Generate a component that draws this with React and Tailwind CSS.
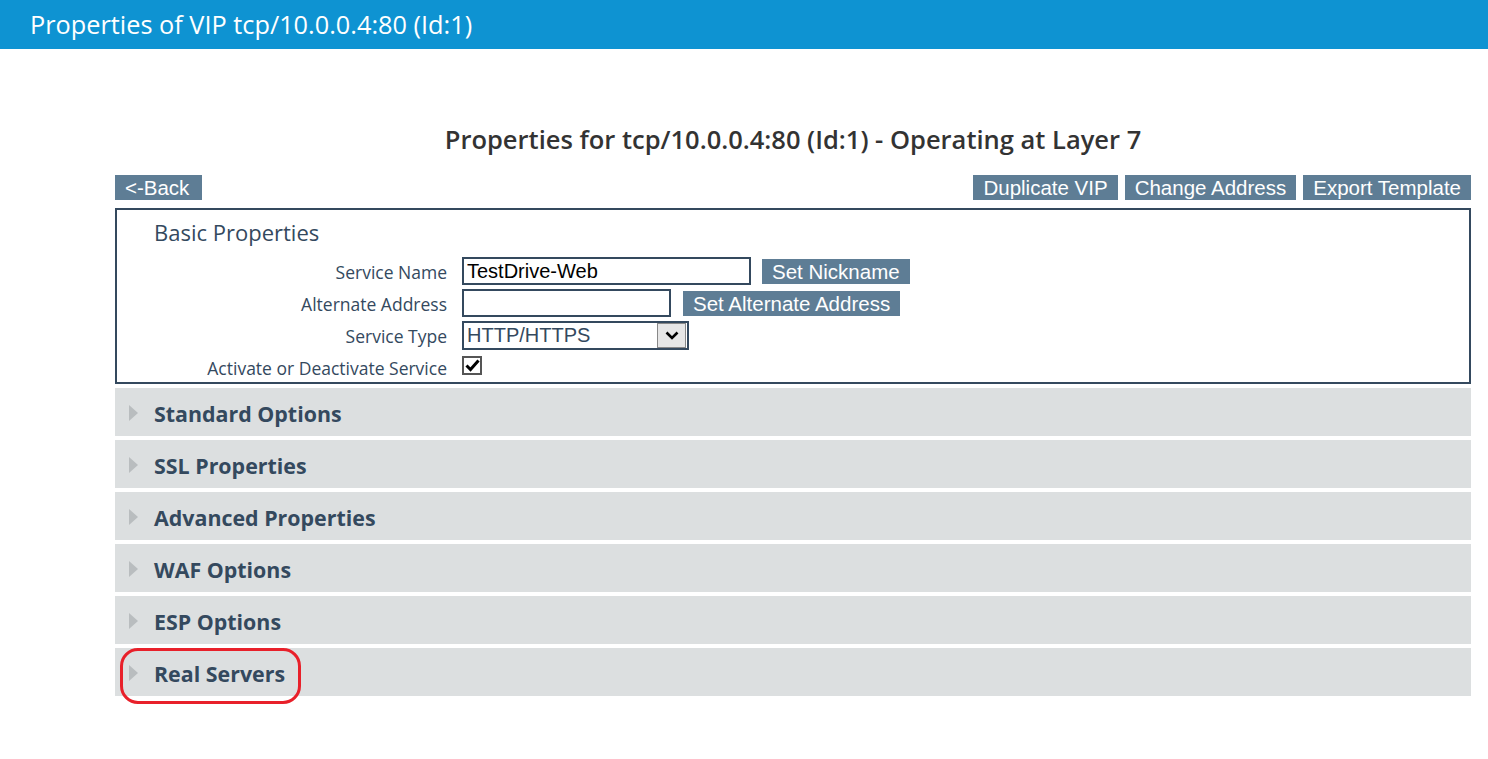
const sans = { fontFamily: '"Open Sans", "Noto Sans", sans-serif' }

function Btn({ children, className = '' }) {
  return (
    <button className={`bg-[#5e7d95] text-white text-[20.5px] leading-[25px] px-[10px] font-['Liberation_Sans',Arial,sans-serif] ${className}`}>
      {children}
    </button>
  )
}

function Row({ label, children }) {
  return (
    <div className="flex items-center h-[32px]">
      <div className="w-[345px] text-right text-[17.5px] text-[#34495e] pr-[15px] pt-[3px]">{label}</div>
      <div className="flex items-center">{children}</div>
    </div>
  )
}

function Section({ title, mark }) {
  return (
    <div className="relative h-[48px] bg-[#dcdfe0] flex items-center">
      <svg width="9" height="16" viewBox="0 0 9 16" className="ml-[14px] mt-[2px]">
        <path d="M0 0 L9 8 L0 16 Z" fill="#b9bdbf" />
      </svg>
      <span className="ml-[16px] pt-[5px] text-[21.4px] font-bold text-[#34495e]">{title}</span>
      {mark && <div className="absolute left-[5px] top-0 w-[181px] h-[56px] border-[3px] border-[#e8202a] rounded-[18px]" />}
    </div>
  )
}

export default function App() {
  const sections = ['Standard Options', 'SSL Properties', 'Advanced Properties', 'WAF Options', 'ESP Options', 'Real Servers']
  return (
    <div className="min-h-[759px] bg-white" style={sans}>
      <div className="h-[49px] bg-[#0e93d2] flex items-center pl-[30px] text-white text-[25.3px]">
        Properties of VIP tcp/10.0.0.4:80 (Id:1)
      </div>

      <div className="ml-[115px] w-[1356px]">
        <h1 className="mt-[75px] text-center text-[25.5px] leading-[30px] font-semibold text-[#333]">
          Properties for tcp/10.0.0.4:80 (Id:1) - Operating at Layer 7
        </h1>

        <div className="mt-[21px] flex justify-between">
          <Btn className="pr-[13px]">&lt;-Back</Btn>
          <div className="flex gap-[7px]">
            <Btn>Duplicate VIP</Btn>
            <Btn>Change Address</Btn>
            <Btn>Export Template</Btn>
          </div>
        </div>

        <div className="mt-[8px] border-2 border-[#34495e] h-[176px]">
          <div className="pl-[37px] pt-[9px] text-[22px] leading-[26px] text-[#34495e]">Basic Properties</div>
          <div className="mt-[10px]">
            <Row label="Service Name">
              <input readOnly value="TestDrive-Web" className="w-[289px] h-[28px] border-2 border-[#34495e] px-[3px] text-[20px] text-black font-['Liberation_Sans',Arial,sans-serif] outline-none" />
              <Btn className="ml-[11px] h-[25px]">Set Nickname</Btn>
            </Row>
            <Row label="Alternate Address">
              <input readOnly value="" className="w-[209px] h-[28px] border-2 border-[#34495e] px-[3px] text-[20px] outline-none" />
              <Btn className="ml-[12px] h-[25px]">Set Alternate Address</Btn>
            </Row>
            <Row label="Service Type">
              <div className="w-[227px] h-[29px] border-2 border-[#34495e] flex items-center justify-between font-['Liberation_Sans',Arial,sans-serif]">
                <span className="pl-[3px] text-[20px] text-[#34495e]">HTTP/HTTPS</span>
                <span className="w-[29px] h-[25px] bg-[#e6e6e6] border border-[#888] flex items-center justify-center mr-[1px]">
                  <svg width="14" height="9" viewBox="0 0 14 9"><path d="M1.5 1.5 L7 7 L12.5 1.5" stroke="#000" strokeWidth="2.6" fill="none" /></svg>
                </span>
              </div>
            </Row>
            <Row label="Activate or Deactivate Service">
              <span className="w-[20px] h-[19px] border-2 border-[#555] bg-white flex items-center justify-center -mt-[4px]">
                <svg width="15" height="13" viewBox="0 0 15 13"><path d="M1.5 6.5 L5.5 10.5 L13.5 1.5" stroke="#000" strokeWidth="3" fill="none" /></svg>
              </span>
            </Row>
          </div>
        </div>

        <div className="mt-[4px] flex flex-col gap-[4px]">
          {sections.map(s => <Section key={s} title={s} mark={s === 'Real Servers'} />)}
        </div>
      </div>
    </div>
  )
}
